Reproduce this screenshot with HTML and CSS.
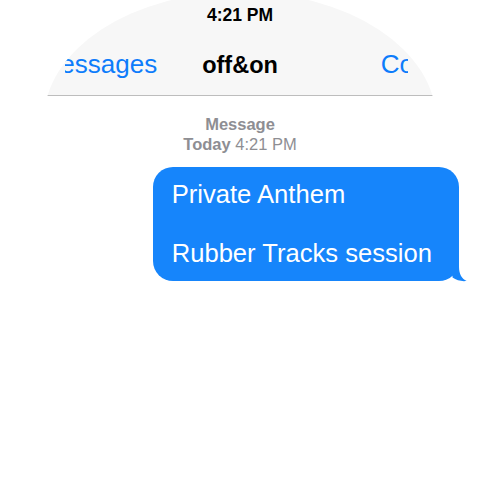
FILE: index.html
```html
<!DOCTYPE html>
<html lang="en">
<head>
<meta charset="utf-8">
<title>off&amp;on</title>
<link rel="stylesheet" href="styles.css">
</head>
<body>
<div class="screen">
  <header class="bar">
    <div class="status">4:21 PM</div>
    <nav class="nav">
      <span class="back">Messages</span>
      <span class="title">off&amp;on</span>
      <span class="action">Contact</span>
    </nav>
  </header>
  <section class="meta">
    <div class="meta-line meta-kind">Message</div>
    <div class="meta-line"><b class="meta-day">Today</b> 4:21 PM</div>
  </section>
  <div class="row">
    <div class="bubble">Private Anthem<br><br>Rubber Tracks session
      <svg class="tail" width="30" height="31" viewBox="0 0 30 31" aria-hidden="true">
        <path d="M22 6 L22 16 C22 23 25 28 29.6 30 C25 30.6 19.5 29.6 15.5 26.6 L15.5 20 L10 20 L10 6 Z"/>
      </svg>
    </div>
  </div>
</div>
</body>
</html>
```
FILE: styles.css
```css
html, body {
  margin: 0;
  padding: 0;
  background: #ffffff;
}

body {
  font-family: "Liberation Sans", Arial, sans-serif;
  width: 480px;
  height: 480px;
  overflow: hidden;
}

.screen {
  width: 480px;
  height: 480px;
}

.bar {
  height: 95px;
  border-bottom: 1px solid #bdbdbd;
  background: #f7f7f7;
  clip-path: ellipse(196px 128px at 240px 120px);
}

.status {
  height: 30px;
  line-height: 30px;
  text-align: center;
  font-weight: bold;
  font-size: 17.5px;
  color: #000;
}

.nav {
  display: grid;
  grid-template-columns: 1fr auto 1fr;
  align-items: baseline;
  padding-top: 19px;
  line-height: 30px;
  white-space: nowrap;
  clip-path: inset(0 72px 0 65px);
}

.back {
  justify-self: end;
  margin-right: 45px;
  font-size: 26px;
  color: #0d7cfb;
}

.title {
  font-size: 23.5px;
  font-weight: bold;
  color: #000;
}

.action {
  justify-self: start;
  margin-left: 103px;
  font-size: 26px;
  color: #0d7cfb;
}

.meta {
  padding-top: 18px;
  text-align: center;
  font-size: 16.5px;
  line-height: 20px;
  color: #8e8e93;
}

.meta-kind,
.meta-day {
  font-weight: bold;
}

.row {
  display: flex;
  justify-content: flex-end;
  margin-top: 13px;
  padding-right: 21px;
}

.bubble {
  position: relative;
  background: #1685fb;
  color: #ffffff;
  border-radius: 20px;
  padding: 12.5px 27px 13px 19px;
  font-size: 25.6px;
  line-height: 29.5px;
  white-space: nowrap;
}

.tail {
  position: absolute;
  right: -8px;
  bottom: -1px;
  fill: #1685fb;
  display: block;
}
```
